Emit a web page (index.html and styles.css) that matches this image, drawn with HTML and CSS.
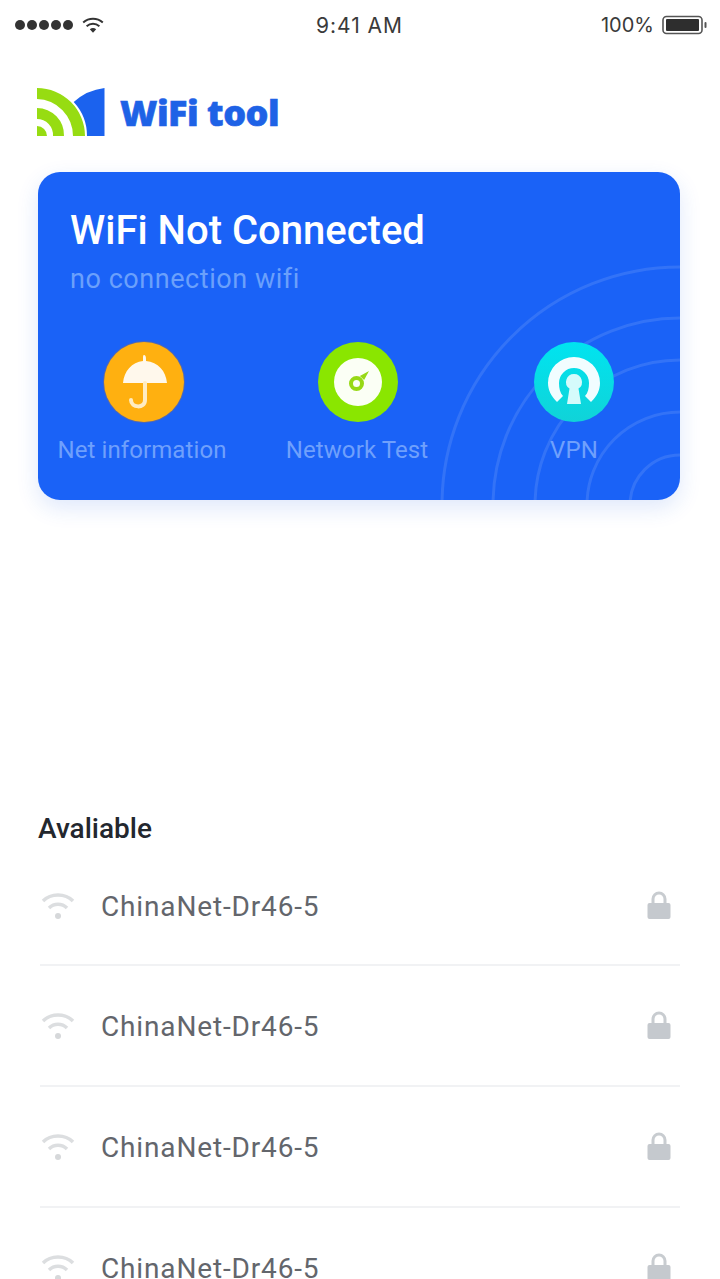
FILE: index.html
```html
<!DOCTYPE html>
<html lang="en">
<head>
<meta charset="utf-8">
<title>WiFi tool</title>
<link rel="stylesheet" href="styles.css">
</head>
<body>
<div class="screen">
  <header class="status">
    <div class="status-left">
      <span class="dots"><i></i><i></i><i></i><i></i><i></i></span>
      <svg class="status-wifi" viewBox="0 0 22 16"><path d="M1.2 5.6C6.8.6 15.2.6 20.8 5.6" fill="none" stroke="#333" stroke-width="2"/><path d="M4.6 9.2c3.800-3.200 9-3.200 12.800 0" fill="none" stroke="#333" stroke-width="2"/><path d="M7.800 12.200c2-1.500 4.400-1.500 6.400 0L11 15.800z" fill="#333"/></svg>
    </div>
    <div class="status-time">9:41 AM</div>
    <div class="status-right">
      <span>100%</span>
      <svg class="battery" viewBox="0 0 46 20"><rect x="1" y="1.500" width="39" height="17" rx="3.500" fill="none" stroke="#555" stroke-width="1.600"/><rect x="4" y="4" width="33" height="12" rx="1" fill="#2e2e2e"/><rect x="42.500" y="7" width="2" height="6" rx="1" fill="#555"/></svg>
    </div>
  </header>

  <div class="brand">
    <svg class="logo" viewBox="0 0 68 48">
      <path d="M36.700 14Q50 2 67.500 0V48H50A50 50 0 0 0 36.700 14Z" fill="#1b62ee"/>
      <path d="M0 0A48 48 0 0 1 48 48H36A37 37 0 0 0 0 11Z" fill="#97dc12"/>
      <path d="M0 20A27 27 0 0 1 27 48H16A16 16 0 0 0 0 31Z" fill="#97dc12"/>
      <path d="M0 38A10 10 0 0 1 10 48H0Z" fill="#97dc12"/>
    </svg>
    <span class="brand-name">WiFi tool</span>
  </div>

  <section class="card">
    <svg class="rings" viewBox="0 0 642 328" aria-hidden="true">
      <g fill="none" stroke="#fff" stroke-opacity=".11" stroke-width="3">
        <circle cx="642" cy="333" r="238"/>
        <circle cx="642" cy="333" r="187"/>
        <circle cx="642" cy="333" r="145"/>
        <circle cx="642" cy="333" r="93"/>
        <circle cx="642" cy="333" r="50"/>
      </g>
    </svg>
    <h1 class="card-title">WiFi Not Connected</h1>
    <p class="card-sub">no connection wifi</p>
    <div class="actions">
      <div class="action">
        <span class="badge badge-orange">
          <svg viewBox="0 0 80 80"><path d="M40 13c1.300 0 2 1.500 2 4v2c12 1 20 10 21 22H19c1-12 9-21 20-22v-2c0-2.500 0-4 1-4z" fill="#fff8ec"/><path d="M41 41v17c0 9-14 8-14 0" fill="none" stroke="#ffecc2" stroke-width="4" stroke-linecap="round"/></svg>
        </span>
        <span class="action-label">Net information</span>
      </div>
      <div class="action">
        <span class="badge badge-green">
          <svg viewBox="0 0 80 80"><circle cx="40" cy="40" r="24" fill="#fbfff5"/><circle cx="38.500" cy="41.500" r="5.500" fill="none" stroke="#97d915" stroke-width="4"/><path d="M51 29 46.100 38.100 41.900 33.900Z" fill="#97d915"/></svg>
        </span>
        <span class="action-label">Network Test</span>
      </div>
      <div class="action">
        <span class="badge badge-cyan">
          <svg viewBox="0 0 80 80"><path d="M23 60C17 54 14 48 14 41a26 26 0 0 1 52 0c0 7-3 13-9 19l-6-6c3-3 4-8 4-13a15 15 0 0 0-30 0c0 5 1 10 4 13Z" fill="#f1fdff"/><path d="M40 32a8 8 0 0 1 4.500 14.600L47 62H33l2.500-15.400A8 8 0 0 1 40 32Z" fill="#d5fbfb"/></svg>
        </span>
        <span class="action-label">VPN</span>
      </div>
    </div>
  </section>

  <section class="networks">
    <h2 class="networks-title">Avaliable</h2>
    <ul class="list">
      <li class="row">
        <svg class="wifi" viewBox="0 0 34 30"><path d="M2 11C10 3 24 3 32 11M8 18c5-5 13-5 18 0" fill="none" stroke="#dcdee0" stroke-width="3.500"/><circle cx="17" cy="26" r="3" fill="#d6d8da"/></svg>
        <span class="row-name">ChinaNet-Dr46-5</span>
        <svg class="lock" viewBox="0 0 24 30"><path d="M6 14V9a6 6 0 0 1 12 0v5" fill="none" stroke="#c8ccd0" stroke-width="3"/><rect x="0.500" y="13" width="23" height="16" rx="2" fill="#c5c9ce"/></svg>
      </li>
      <li class="row">
        <svg class="wifi" viewBox="0 0 34 30"><path d="M2 11C10 3 24 3 32 11M8 18c5-5 13-5 18 0" fill="none" stroke="#dcdee0" stroke-width="3.500"/><circle cx="17" cy="26" r="3" fill="#d6d8da"/></svg>
        <span class="row-name">ChinaNet-Dr46-5</span>
        <svg class="lock" viewBox="0 0 24 30"><path d="M6 14V9a6 6 0 0 1 12 0v5" fill="none" stroke="#c8ccd0" stroke-width="3"/><rect x="0.500" y="13" width="23" height="16" rx="2" fill="#c5c9ce"/></svg>
      </li>
      <li class="row">
        <svg class="wifi" viewBox="0 0 34 30"><path d="M2 11C10 3 24 3 32 11M8 18c5-5 13-5 18 0" fill="none" stroke="#dcdee0" stroke-width="3.500"/><circle cx="17" cy="26" r="3" fill="#d6d8da"/></svg>
        <span class="row-name">ChinaNet-Dr46-5</span>
        <svg class="lock" viewBox="0 0 24 30"><path d="M6 14V9a6 6 0 0 1 12 0v5" fill="none" stroke="#c8ccd0" stroke-width="3"/><rect x="0.500" y="13" width="23" height="16" rx="2" fill="#c5c9ce"/></svg>
      </li>
      <li class="row">
        <svg class="wifi" viewBox="0 0 34 30"><path d="M2 11C10 3 24 3 32 11M8 18c5-5 13-5 18 0" fill="none" stroke="#dcdee0" stroke-width="3.500"/><circle cx="17" cy="26" r="3" fill="#d6d8da"/></svg>
        <span class="row-name">ChinaNet-Dr46-5</span>
        <svg class="lock" viewBox="0 0 24 30"><path d="M6 14V9a6 6 0 0 1 12 0v5" fill="none" stroke="#c8ccd0" stroke-width="3"/><rect x="0.500" y="13" width="23" height="16" rx="2" fill="#c5c9ce"/></svg>
      </li>
    </ul>
  </section>
</div>
</body>
</html>
```
FILE: styles.css
```css
* { box-sizing: border-box; }
html, body { margin: 0; padding: 0; background: #fff; }
.screen {
  width: 720px;
  height: 1279px;
  overflow: hidden;
  font-family: Roboto, "Liberation Sans", sans-serif;
}
.status {
  height: 50px;
  padding: 0 12px 0 15px;
  display: grid;
  grid-template-columns: 1fr auto 1fr;
  align-items: center;
  font-family: Inter, Roboto, sans-serif;
  font-size: 20px;
  color: #3a3a3a;
}
.status-left { display: flex; align-items: center; gap: 9px; }
.dots { display: flex; gap: 2px; }
.dots i { width: 10px; height: 10px; border-radius: 50%; background: #333; }
.status-wifi { width: 22px; height: 16px; }
.status-time { font-size: 21px; letter-spacing: 1px; margin-right: 4px; }
.status-right { display: flex; align-items: center; justify-content: flex-end; gap: 8px; }
.battery { width: 46px; height: 20px; }
.brand {
  margin: 38px 0 0 37px;
  height: 48px;
  display: flex;
  align-items: center;
  gap: 15px;
}
.logo { width: 68px; height: 48px; flex: none; }
.brand-name {
  font-family: "Open Sans", sans-serif;
  font-weight: 800;
  font-size: 36px;
  letter-spacing: -.5px;
  -webkit-text-stroke: .6px #1e62e6;
  color: #1e62e6;
}
.card {
  position: relative;
  overflow: hidden;
  margin: 36px 40px 0 38px;
  height: 328px;
  padding: 34px 0 0;
  border-radius: 22px;
  background: #1a62f7;
  box-shadow: 0 8px 22px rgba(30, 90, 230, .14);
}
.rings { position: absolute; inset: 0; width: 100%; height: 100%; }
.card-title {
  position: relative;
  margin: 0 0 0 32px;
  font-size: 40px;
  line-height: 50px;
  font-weight: 500;
  color: #fff;
}
.card-sub {
  position: relative;
  margin: 3px 0 0 32px;
  font-size: 27px;
  letter-spacing: .55px;
  line-height: 40px;
  color: #6ba0fb;
}
.actions {
  position: relative;
  margin: 43px 0 0;
  display: grid;
  grid-template-columns: 208px 222px 212px;
}
.action { display: flex; flex-direction: column; align-items: center; gap: 11px; }
.badge { width: 80px; height: 80px; border-radius: 50%; display: block; }
.action:nth-child(1) .badge { margin-left: 4px; }
.action:nth-child(2) .badge { margin-left: 2px; }
.badge svg { display: block; width: 80px; height: 80px; }
.badge-orange { background: #ffb010; box-shadow: 0 0 0 1px rgba(150,110,90,.45); }
.badge-green { background: #8ae600; }
.badge-cyan { background: linear-gradient(#00e4f0, #10d3d8); }
.action-label { font-size: 24px; letter-spacing: .1px; line-height: 34px; color: #6fa0fc; white-space: nowrap; }
.networks { margin: 0 40px 0 38px; padding-top: 311px; }
.networks-title {
  margin: 0;
  font-size: 28px;
  line-height: 36px;
  font-weight: 500;
  color: #23272e;
}
.list { list-style: none; margin: 0 0 0 2px; padding: 0; }
.row {
  height: 121px;
  display: flex;
  align-items: center;
  padding: 0 9px 2px 1px;
  border-bottom: 2px solid #f1f2f4;
  gap: 26px;
}
.row:first-child { height: 119px; }
.wifi { width: 34px; height: 30px; flex: none; }
.row-name { flex: 1; margin-top: 4px; font-size: 28px; letter-spacing: .85px; color: #63666c; }
.lock { width: 24px; height: 30px; flex: none; }
```
